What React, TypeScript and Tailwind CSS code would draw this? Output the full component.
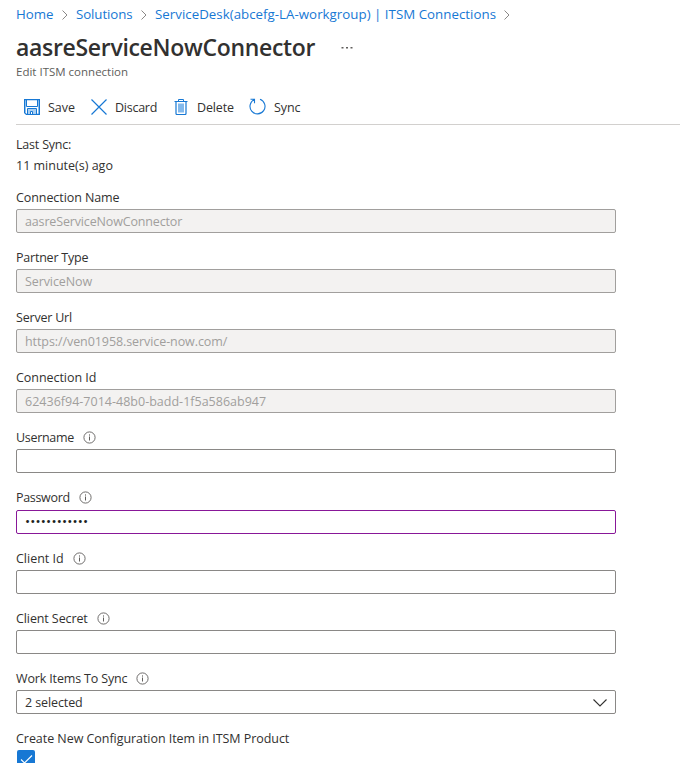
import React from "react";

function Chevron({ className }: { className: string }) {
  return (
    <svg className={className} width="6" height="10" viewBox="0 0 6 10" fill="none" stroke="#8a8886" strokeWidth="1">
      <path d="M0.5 0.5 5 5 0.5 9.5" />
    </svg>
  );
}

function Info() {
  return (
    <svg className="mt-px ml-[9px] shrink-0" width="13" height="13" viewBox="0 0 13 13" fill="none" stroke="#605e5c">
      <circle cx="6.5" cy="6.5" r="5.6" strokeWidth="0.9" />
      <path d="M6.5 5.5v4M6.5 3.4v1.2" strokeWidth="1" />
    </svg>
  );
}

function SaveIcon() {
  return (
    <svg width="16" height="16" viewBox="0 0 16 16" fill="none" stroke="#1778d4">
      <path d="M1.5 1v12.5M14.5 1v14" stroke="#a9cff2" />
      <path d="M0.6 0.6h14.8v14.8H2.3L0.6 13.7z" strokeWidth="1.2" />
      <path d="M2.5 1v6.5h11V1" />
      <path d="M4 10h8v5H4z" fill="#a9cff2" stroke="none" />
      <path d="M3.5 15V9.5h9V15" />
      <path d="M6.5 15v-2.5h2V15" fill="white" />
    </svg>
  );
}

function DeleteIcon() {
  return (
    <svg width="14" height="16" viewBox="0 0 14 16" fill="none" stroke="#1778d4">
      <path d="M0.5 2.5h13M4.5 2.5v-2h5v2" />
      <path d="M2 2.5v12q0 1 1 1h8q1 0 1-1v-12" strokeWidth="1.2" />
      <path d="M4 4.5h6v9H4z" fill="#83b9ec" stroke="none" />
    </svg>
  );
}

type FieldProps = {
  label: string;
  labelClass: string;
  info?: boolean;
  value?: string;
  valueClass?: string;
  boxClass: string;
  boxGap?: string;
  children?: React.ReactNode;
};

function Field({ label, labelClass, info, value, valueClass = "", boxClass, boxGap = "mt-[3px]", children }: FieldProps) {
  return (
    <div className="w-[600px]">
      <div className="flex h-[18px] items-center">
        <span className={`pt-0.5 ${labelClass}`}>{label}</span>
        {info && <Info />}
      </div>
      <div className={`${boxGap} flex h-6 items-center justify-between rounded-[2px] border px-2 ${boxClass}`}>
        <span className={valueClass}>{value}</span>
        {children}
      </div>
    </div>
  );
}

const disabled = "border-[#a19f9d] bg-[#f3f2f1] text-[#a19f9d]";
const enabled = "border-[#8a8886] bg-white";

export default function App() {
  return (
    <div className="h-[763px] w-[680px] overflow-hidden bg-white pl-4 font-['Open_Sans',sans-serif] text-[12.5px] leading-[18px] whitespace-nowrap text-[#323130]">
      <nav className="flex h-[29px] items-center text-[13.3px] text-[#1778d4]">
        <span className="w-[39px] pb-0.5">Home</span>
        <Chevron className="mr-2 ml-[7px]" />
        <span className="w-[57px] pb-0.5 tracking-[-0.1px]">Solutions</span>
        <Chevron className="mx-2" />
        <span className="w-[341px] pb-0.5 tracking-[0.02px]">ServiceDesk(abcefg-LA-workgroup) | ITSM Connections</span>
        <Chevron className="ml-2" />
      </nav>
      <header>
        <div className="flex h-[35px] items-center">
          <h1 className="w-[325px] text-[23px] leading-[30px] font-semibold tracking-[-0.31px]">aasreServiceNowConnector</h1>
          <svg className="mt-0.5" width="12" height="3" viewBox="0 0 12 3" fill="#605e5c">
            <path d="M0.5 1h2v1.5h-2zM5 1h2v1.5H5zM9.5 1h2v1.5h-2z" />
          </svg>
        </div>
        <p className="h-[18px] text-[11.5px] leading-4 text-[#605e5c]">Edit ITSM connection</p>
      </header>
      <div className="mt-[7px] flex h-9 items-center border-b border-[#d2d0ce] pl-2">
        <SaveIcon />
        <span className="ml-2 w-[43px] pt-0.5">Save</span>
        <svg width="16" height="16" viewBox="0 0 16 16" fill="none" stroke="#1778d4" strokeWidth="1.2">
          <path d="M0.5 0.5 15.5 15.5M15.5 0.5 0.5 15.5" />
        </svg>
        <span className="ml-2 w-[59px] pt-0.5 tracking-[-0.25px]">Discard</span>
        <DeleteIcon />
        <span className="ml-[9px] w-[52px] pt-0.5 tracking-[-0.15px]">Delete</span>
        <svg width="17" height="17" viewBox="0 0 17 17" fill="none" stroke="#1778d4" strokeWidth="1.1">
          <path d="M11 1.3a7.5 7.5 0 1 1-5.5 0.2M1.5 1.3h4v4" />
        </svg>
        <span className="ml-2 pt-0.5 tracking-[-0.1px]">Sync</span>
      </div>
      <main>
        <div className="mt-[11px]">
          <p className="h-[21px] tracking-[-0.2px]">Last Sync:</p>
          <p className="h-[21px]">11 minute(s) ago</p>
        </div>
        <div className="mt-[10px] flex flex-col gap-[15px]">
          <Field label="Connection Name" labelClass="tracking-[-0.08px]" value="aasreServiceNowConnector" valueClass="pt-0.5 tracking-[-0.15px]" boxClass={disabled} />
          <Field label="Partner Type" labelClass="tracking-[-0.22px]" value="ServiceNow" valueClass="pt-0.5 tracking-[-0.1px]" boxClass={disabled} />
          <Field label="Server Url" labelClass="tracking-[-0.2px]" value="https://ven01958.service-now.com/" valueClass="pt-0.5 tracking-[-0.08px]" boxClass={disabled} />
          <Field label="Connection Id" labelClass="tracking-[-0.05px]" value="62436f94-7014-48b0-badd-1f5a586ab947" valueClass="pt-0.5 tracking-[0.01px]" boxClass={disabled} />
          <Field label="Username" labelClass="tracking-[-0.3px]" info boxClass={enabled} />
          <Field label="Password" labelClass="tracking-[-0.32px]" info boxGap="mt-1" value="••••••••••••" valueClass="pb-0.5 text-[13.5px] tracking-[0.2px] text-[#201f1e]" boxClass="border-[#881798] bg-white" />
          <Field label="Client Id" labelClass="" info boxClass={enabled} />
          <Field label="Client Secret" labelClass="tracking-[-0.1px]" info boxClass={enabled} />
          <Field label="Work Items To Sync" labelClass="tracking-[-0.15px]" info value="2 selected" valueClass="pt-0.5 tracking-[-0.1px]" boxClass={enabled}>
            <svg className="mt-px" width="14" height="8" viewBox="0 0 14 8" fill="none" stroke="#323130" strokeWidth="1.1">
              <path d="M0.5 0.5 7 7 13.5 0.5" />
            </svg>
          </Field>
          <div>
            <p className="h-[18px] leading-5 tracking-[-0.05px]">Create New Configuration Item in ITSM Product</p>
            <div className="mt-[3px] ml-px h-[18px] w-[18px] rounded-[2px] bg-[#1778d4]">
              <svg width="18" height="18" viewBox="0 0 18 18" fill="none" stroke="white" strokeWidth="1.1">
                <path d="M4 9.5 7.5 13 15 5.5" />
              </svg>
            </div>
          </div>
        </div>
      </main>
    </div>
  );
}
